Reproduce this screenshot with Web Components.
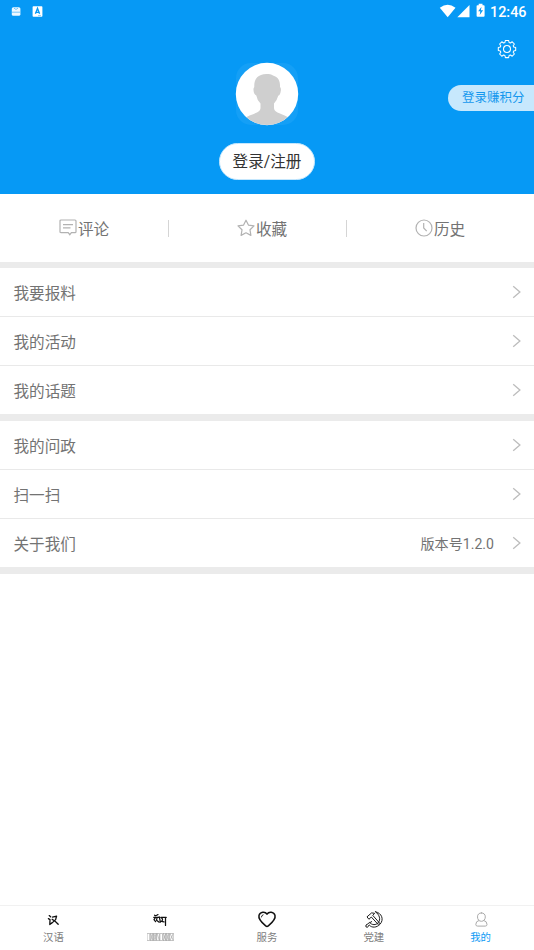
<!DOCTYPE html>
<html lang="zh-CN">
<head>
<meta charset="utf-8">
<title>我的</title>
<style>
html,body{margin:0;height:100%;background:#fff}
body{font-family:Roboto,"Noto Sans CJK SC",sans-serif;overflow:hidden}
</style>
</head>
<body>
<profile-page></profile-page>
<script>
const define = (name, html) => customElements.define(name, class extends HTMLElement {
  constructor() {
    super();
    const t = document.createElement('template');
    t.innerHTML = html;
    this.attachShadow({mode: 'open'}).append(t.content.cloneNode(true));
  }
});

define('status-bar', `<style>
:host{display:flex;height:23px;align-items:center;justify-content:space-between;padding:0 7.5px 0 11px;color:#fff}
div{display:flex;align-items:center}
svg{display:block}
.time{font:500 14.4px/23px Roboto,sans-serif;margin-left:4.5px;padding-top:1px}
</style>
<div><svg width="32" height="23" viewBox="0 0 32 23">
<rect x=".8" y="7.2" width="8.6" height="8.6" rx="1.6" fill="#fff" opacity=".93"/><path d="M3 8.2Q5 10.7 7 8.2M1 12.2H9" stroke="#58b9f7" stroke-width=".8" fill="none"/>
<rect x="21.6" y="6.2" width="9.8" height="10.6" rx=".8" fill="#fff"/><path d="M24.4 13.8L26.5 8.4L28.6 13.8M25.2 12.3H27.8" stroke="#0699f5" stroke-width="1.3" fill="none"/><path d="M27 15.6H30" stroke="#58b9f7" stroke-width=".7"/>
</svg></div>
<div><svg width="46" height="23" viewBox="438.5 0 46 23" fill="#fff">
<path d="M439.3 7.7Q447.2 2 455 7.7L447.2 17.2Z"/><path d="M469 5V17.2H456.8Z"/>
<path d="M478.2 3.8H482V5.2H483.2Q484.1 5.2 484.1 6.1V15.8Q484.1 16.7 483.2 16.7H477Q476.1 16.7 476.1 15.8V6.1Q476.1 5.2 477 5.2H478.2Z"/><path d="M481 6.8L477.7 11.3H479.8L479.2 15L482.6 10.2H480.4Z" fill="#0699f5"/>
</svg><span class="time">12:46</span></div>`);

define('profile-header', `<style>
:host{display:flex;flex-direction:column;align-items:center;height:194px;background:#0699f5;position:relative}
status-bar{align-self:stretch}
.gear{position:absolute;left:497px;top:39px}
.points{position:absolute;right:0;top:85px;width:86px;height:26px;box-sizing:border-box;padding-left:14px;border-radius:13px 0 0 13px;background:#c7e8fd;color:#1598ee;font-size:12.5px;line-height:26px;white-space:nowrap}
.avatar{margin-top:39px;display:block}
.login{margin-top:17px;width:96px;height:37px;box-sizing:border-box;border-radius:18.5px;background:#fff;border:1px solid #c5e7fd;color:#333;font-size:15.6px;line-height:36px;text-align:center}
</style>
<status-bar></status-bar>
<svg class="gear" width="20" height="20" viewBox="-10 -10 20 20" fill="none" stroke="#fff" stroke-width="1.05" stroke-linejoin="round"><path d="M-1.6-8.6H1.6L2.1-6.5L3.4-6L5.2-7.2L7.4-5L6.2-3.2L6.7-1.9L8.7-1.5V1.5L6.7 1.9L6.2 3.2L7.4 5L5.2 7.2L3.4 6L2.1 6.5L1.6 8.6H-1.6L-2.1 6.5L-3.4 6L-5.2 7.2L-7.4 5L-6.2 3.2L-6.7 1.9L-8.7 1.5V-1.5L-6.7-1.9L-6.2-3.2L-7.4-5L-5.2-7.2L-3.4-6L-2.1-6.5Z"/><circle r="3.5"/></svg>
<div class="points">登录赚积分</div>
<svg class="avatar" width="64" height="64" viewBox="0 0 64 64"><defs><clipPath id="c"><circle cx="32" cy="32" r="31"/></clipPath></defs><rect x="1" y="1" width="62" height="62" rx="15" fill="#149ff6"/><circle cx="32" cy="32" r="31.2" fill="#fff"/><path clip-path="url(#c)" fill="#cfcfcf" d="M8 64V57C12 54 19 52 22 50.5Q25.5 48.8 25.5 46V41.5Q22 38 21.3 33.5Q18.8 32.5 18.5 28Q18.3 25.8 19.3 25C18.8 17.5 22.5 12.1 31.5 12C34 12 36.5 12.3 38 13.5C43.5 15 45.3 19.5 45 25Q46.3 26 45.8 29Q45.3 33 43.2 33.7Q42.2 38 39 41.5V46Q39 48.8 42.5 50.5C46 52 52 54 56 57V64Z"/></svg>
<div class="login">登录/注册</div>`);

define('quick-link', `<style>
:host{display:flex;align-items:center;justify-content:center;flex:1;font-size:15.6px;line-height:24px;color:#737373;position:relative}
:host([divided])::after{content:"";position:absolute;right:9px;top:26px;height:17px;width:1px;background:#d5d5d5}
</style><slot name="icon"></slot><slot></slot>`);

define('quick-links', `<style>
:host{display:flex;height:68px}
svg{display:block;fill:none;stroke:#b2b2b2;stroke-width:1.2}
span{padding-top:3px;margin-left:1px}
quick-link{padding-right:10px;box-sizing:border-box}
</style>
<quick-link divided><svg slot="icon" width="18" height="18" viewBox="0 0 18 18"><path d="M1 2Q1 1 2 1H16Q17 1 17 2V12.7Q17 13.7 16 13.7H12.4L10.8 15.7L9.2 13.7H2Q1 13.7 1 12.7ZM4 5.6H14M4 8.8H11.5"/></svg><span>评论</span></quick-link>
<quick-link divided><svg slot="icon" width="18" height="18" viewBox="0 0 18 18"><path stroke-linejoin="round" d="M9 1.2L11.4 6.1L17 6.9L13 10.8L13.9 16.4L9 13.8L4.1 16.4L5 10.8L1 6.9L6.6 6.1Z"/></svg><span>收藏</span></quick-link>
<quick-link><svg slot="icon" width="18" height="18" viewBox="0 0 18 18"><circle cx="9" cy="9" r="8"/><path d="M8.7 4V9L11.7 12.2"/></svg><span>历史</span></quick-link>`);

define('menu-row', `<style>
:host{display:flex;align-items:center;height:48px;padding:0 12px 0 13.5px;font-size:15.6px;color:#737373;border-bottom:1px solid #e9e9e9}
:host([last]){border-bottom:0}
.label{flex:1;padding-bottom:1px}
.value{font-size:14.1px;margin-right:18px;padding-bottom:1px}
svg{display:block}
</style><span class="label"><slot></slot></span><span class="value"><slot name="value"></slot></span>
<svg width="10" height="14" viewBox="0 0 10 14" fill="none" stroke="#bdbdbd" stroke-width="1.3"><path d="M1.2 1.2L7.9 7L1.2 12.8"/></svg>`);

define('menu-group', `<style>
:host{display:block;border-bottom:7px solid #ebebeb}
:host([first]){border-top:6px solid #ebebeb}
</style><slot></slot>`);

define('tab-item', `<style>
:host{display:flex;flex:1;flex-direction:column;align-items:center;color:#808080;font-size:10.4px;line-height:16px;padding-top:4px}
:host([active]){color:#0c9af5}
.label{height:16px}
</style><slot name="icon"></slot><span class="label"><slot></slot></span>`);

define('tab-bar', `<style>
:host{display:flex;height:44px;border-top:1px solid #f1f1f1}
svg{display:block;fill:none;stroke:#111;stroke-linecap:round;stroke-linejoin:round}
.missing{stroke:#999;stroke-width:.55;margin-top:3px}
</style>
<tab-item><svg slot="icon" width="20" height="20" viewBox="0 0 20 20"><path stroke-width="1.3" d="M6.2 5.6L7.6 6.8M5.4 8.6L7 9.6L6.8 14.6L9 12.7M9.4 7.2L13.6 6.1L12.6 9.6L8.6 13.4M9.2 9.3Q12 10.6 15.2 14.3"/></svg>汉语</tab-item>
<tab-item><svg slot="icon" width="20" height="20" viewBox="0 0 20 20"><path stroke-width="1.25" d="M4.6 5.2Q6 6.2 8 4.6M3.8 7.4H8.6M5.4 7.6L4 9.6L5.6 11.7M7 8.2L6.5 10.2L9.2 12.2M9.3 6.9L10.4 12.2M10.8 7.4H16.2M11.6 8Q13.6 9.5 11.4 11.4L14 11.8M15.5 7.6V15.4"/></svg><svg class="missing" width="27" height="8" viewBox="0 0 27 8"><path d="M.5.5H2.8V7.5H.5ZM3.7.5H6V7.5H3.7ZM6.9.5H9.2V7.5H6.9ZM10.1.5H12.4V7.5H10.1ZM13.3.5H15.6V7.5H13.3ZM16.5.5H18.8V7.5H16.5ZM19.7.5H22V7.5H19.7ZM23 .5H26.3V7.5H23ZM3.7.5L6 7.5M6 .5L3.7 7.5M6.9.5L9.2 7.5M9.2.5L6.9 7.5M10.1.5L12.4 7.5M16.5.5L18.8 7.5M18.8.5L16.5 7.5M19.7.5L22 7.5M22 .5L19.7 7.5M23 .5L26.3 7.5M26.3.5L23 7.5"/></svg></tab-item>
<tab-item><svg slot="icon" width="20" height="20" viewBox="0 0 20 20"><path stroke-width="1.55" d="M10 4.1C8.2 1.3 3.1 1.6 2 5.4C1 9.2 5.7 13.4 8.7 15.9Q10 16.9 11.3 15.9C14.3 13.4 19 9.2 18 5.4C16.9 1.6 11.8 1.3 10 4.1Z"/><path stroke-width=".9" d="M4.4 7Q4.5 5.2 6.1 4.8"/></svg>服务</tab-item>
<tab-item><svg slot="icon" width="20" height="20" viewBox="0 0 20 20"><path stroke-width=".95" d="M3.3 6.6L7.6 2.9L10.6 3.3L8.8 5.4L15.6 13.1L14.2 14.5L7.3 7L5.2 9ZM11.6 1.8C17.8 3 20.2 9.4 16.1 14.2C12.8 17.7 7.8 18.2 5.2 14.9L3.5 17.3L1.9 16.8L2 15L4.7 13.4L5.4 12.3C8 15.4 12 15.2 14.1 12.8C17.1 9.5 15.5 4.8 11.6 1.8ZM6 12.6L7.7 11.6"/></svg>党建</tab-item>
<tab-item active><svg slot="icon" width="20" height="20" viewBox="0 0 20 20" style="stroke:#aaa"><path d="M10.4 2.9C7.9 2.9 6.5 4.5 6.5 6.9C6.5 9.4 8 11.3 10.4 11.3C12.8 11.3 14.3 9.4 14.3 6.9C14.3 4.5 12.9 2.9 10.4 2.9ZM7.8 10.5Q4.8 11.2 4.8 14.4Q4.8 16.1 6.5 16.1H14.3Q16 16.1 16 14.4Q16 11.2 13 10.5"/></svg>我的</tab-item>`);

define('profile-page', `<style>
:host{display:flex;flex-direction:column;height:950px;width:534px;background:#fff}
main{flex:1}
</style>
<profile-header></profile-header>
<quick-links></quick-links>
<main>
<menu-group first><menu-row>我要报料</menu-row><menu-row>我的活动</menu-row><menu-row last>我的话题</menu-row></menu-group>
<menu-group><menu-row>我的问政</menu-row><menu-row>扫一扫</menu-row><menu-row last>关于我们<span slot="value">版本号1.2.0</span></menu-row></menu-group>
</main>
<tab-bar></tab-bar>`);
</script>
</body>
</html>
